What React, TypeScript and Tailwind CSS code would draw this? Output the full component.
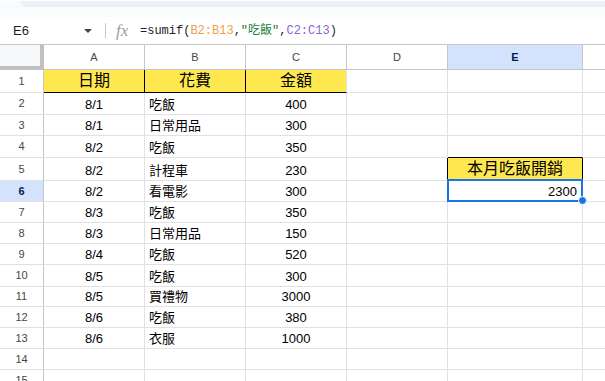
import React from "react";

const cols = [
  { key: "h", w: 44 },
  { key: "A", w: 101 },
  { key: "B", w: 101 },
  { key: "C", w: 101 },
  { key: "D", w: 101 },
  { key: "E", w: 135 },
  { key: "F", w: 30 },
];

type Row = { n: number; h: number; a?: string; b?: string; c?: string; e?: string };

const rows: Row[] = [
  { n: 1, h: 23, a: "日期", b: "花費", c: "金額" },
  { n: 2, h: 22, a: "8/1", b: "吃飯", c: "400" },
  { n: 3, h: 21, a: "8/1", b: "日常用品", c: "300" },
  { n: 4, h: 22, a: "8/2", b: "吃飯", c: "350" },
  { n: 5, h: 23, a: "8/2", b: "計程車", c: "230", e: "本月吃飯開銷" },
  { n: 6, h: 21, a: "8/2", b: "看電影", c: "300", e: "2300" },
  { n: 7, h: 21, a: "8/3", b: "吃飯", c: "350" },
  { n: 8, h: 21, a: "8/3", b: "日常用品", c: "150" },
  { n: 9, h: 21, a: "8/4", b: "吃飯", c: "520" },
  { n: 10, h: 22, a: "8/5", b: "吃飯", c: "300" },
  { n: 11, h: 20, a: "8/5", b: "買禮物", c: "3000" },
  { n: 12, h: 21, a: "8/6", b: "吃飯", c: "380" },
  { n: 13, h: 21, a: "8/6", b: "衣服", c: "1000" },
  { n: 14, h: 21 },
  { n: 15, h: 21 },
];

const font = { fontFamily: '"Liberation Sans", Arial, "Noto Sans CJK TC", sans-serif' };

function Cell({
  w,
  h,
  right = "border-r-[#e1e1e1]",
  bottom = "border-b-[#e1e1e1]",
  bg = "",
  align = "justify-center",
  children,
  big = false,
}: {
  w: number;
  h: number;
  right?: string;
  bottom?: string;
  bg?: string;
  align?: string;
  children?: React.ReactNode;
  big?: boolean;
}) {
  return (
    <div
      className={`flex shrink-0 border-r border-b ${right} ${bottom} ${bg} ${align} ${
        big ? "items-center text-[16px]" : "items-end pb-[3px] text-[13px]"
      } text-black leading-none whitespace-nowrap`}
      style={{ width: w, height: h }}
    >
      {children}
    </div>
  );
}

export default function App() {
  return (
    <div className="w-[605px] h-[381px] overflow-hidden bg-white relative" style={font}>
      {/* top strip */}
      <div className="h-[16px] bg-[#f9fbfd] pl-5">
        <div className="h-[6px] mt-[1px] bg-[#edf2fa] rounded-bl-[8px]" />
      </div>

      {/* formula bar */}
      <div className="h-[27px] flex items-center">
        <div className="w-[105px] flex items-center pl-[13px] pr-[13px] justify-between">
          <span className="text-[13px] text-[#1f1f1f]">E6</span>
          <span className="w-0 h-0 border-l-[4px] border-r-[4px] border-t-[4px] border-l-transparent border-r-transparent border-t-[#444746]" />
        </div>
        <div className="w-px h-[15px] bg-[#c4c7c5]" />
        <span
          className="ml-[10px] w-[24px] text-[17px] italic text-[#9aa0a6]"
          style={{ fontFamily: '"Liberation Serif", "DejaVu Serif", serif' }}
        >
          fx
        </span>
        <span
          className="text-[12px] text-[#1f1f1f] whitespace-pre"
          style={{ fontFamily: '"Liberation Mono", "Noto Sans CJK TC", monospace' }}
        >
          =sumif(<span className="text-[#f1a04d]">B2:B13</span>,
          <span className="text-[#188038]">"吃飯"</span>,<span className="text-[#8e63ce]">C2:C13</span>)
        </span>
      </div>

      {/* column header row */}
      <div className="flex border-t border-[#c4c7c5] h-[26px]">
        {cols.map((c) => {
          if (c.key === "h")
            return (
              <div
                key={c.key}
                className="shrink-0 bg-[#f8f9fa] border-r-[4px] border-b-[4px] border-[#c0c0c0]"
                style={{ width: c.w, height: 25 }}
              />
            );
          const sel = c.key === "E";
          return (
            <div
              key={c.key}
              className={`shrink-0 flex items-center justify-center border-r border-b border-[#c4c7c5] text-[11px] ${
                sel ? "bg-[#d3e3fd] text-[#041e49] font-bold" : "bg-white text-[#444746]"
              }`}
              style={{ width: c.w, height: 25 }}
            >
              {c.key === "F" ? "" : c.key}
            </div>
          );
        })}
      </div>

      {/* rows */}
      {rows.map((r) => {
        const isHead = r.n === 1;
        const black = "border-r-black";
        const blackB = "border-b-black";
        return (
          <div key={r.n} className="flex">
            <div
              className={`shrink-0 flex items-center justify-center border-r border-b border-r-[#c4c7c5] border-b-[#e1e1e1] text-[11px] ${
                r.n === 6 ? "bg-[#d3e3fd] text-[#041e49] font-bold" : "text-[#444746]"
              }`}
              style={{ width: 44, height: r.h }}
            >
              {r.n}
            </div>
            <Cell
              w={101}
              h={r.h}
              big={isHead}
              bg={isHead ? "bg-[#ffe84f]" : ""}
              right={isHead ? black : undefined}
              bottom={isHead ? blackB : undefined}
            >
              {r.a}
            </Cell>
            <Cell
              w={101}
              h={r.h}
              big={isHead}
              bg={isHead ? "bg-[#ffe84f]" : ""}
              right={isHead ? black : undefined}
              bottom={isHead ? blackB : undefined}
              align={isHead ? "justify-center" : "justify-start pl-[4px]"}
            >
              {r.b}
            </Cell>
            <Cell
              w={101}
              h={r.h}
              big={isHead}
              bg={isHead ? "bg-[#ffe84f]" : ""}
              bottom={isHead ? blackB : undefined}
            >
              {r.c}
            </Cell>
            <Cell w={101} h={r.h} right={r.n === 5 ? black : undefined} />
            <Cell
              w={135}
              h={r.h}
              big={r.n === 5}
              bg={r.n === 5 ? "bg-[#ffe84f]" : ""}
              right={r.n === 5 ? black : undefined}
              bottom={r.n === 4 || r.n === 5 ? blackB : undefined}
              align={r.n === 6 ? "justify-end pr-[5px]" : "justify-center"}
            >
              {r.e}
            </Cell>
            <Cell w={30} h={r.h} />
          </div>
        );
      })}

      {/* selection on E6 */}
      <div className="absolute left-[447px] top-[179px] w-[136px] h-[23px] border-2 border-[#1a73e8] pointer-events-none" />
      <div className="absolute left-[578px] top-[196px] w-[9px] h-[9px] rounded-full bg-[#1a73e8] border border-white" />
    </div>
  );
}
